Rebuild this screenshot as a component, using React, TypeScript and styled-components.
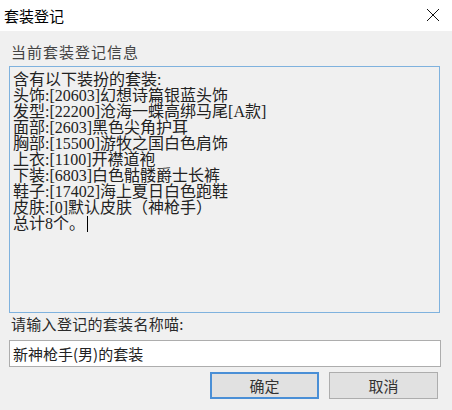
import React from 'react';
import styled, { createGlobalStyle } from 'styled-components';

const GlobalStyle = createGlobalStyle`
  html, body {
    margin: 0;
    padding: 0;
    background: #f0f0f0;
  }
  body {
    font-family: "Noto Sans CJK SC", "Liberation Sans", sans-serif;
  }
`;

const Window = styled.div`
  width: 452px;
  height: 410px;
  display: flex;
  flex-direction: column;
  background: #f0f0f0;
  overflow: hidden;
`;

const TitleBar = styled.div`
  height: 31px;
  background: #ffffff;
  display: flex;
  align-items: center;
  justify-content: space-between;
  padding: 0 12px 0 4px;
  font-size: 15px;
  color: #000;
`;

const CloseBtn = styled.div`
  width: 14px;
  height: 14px;
  display: flex;
  margin-top: -2px;
`;

const Body = styled.div`
  display: flex;
  flex-direction: column;
  padding: 10px 0 0 9px;
`;

const Label = styled.div<{ $muted?: boolean }>`
  height: 22px;
  line-height: 22px;
  font-size: 15px;
  padding-left: 2px;
  letter-spacing: ${p => (p.$muted ? '1px' : '0.3px')};
  color: ${p => (p.$muted ? '#444' : '#2a2a2a')};
`;

const InfoBox = styled.div`
  box-sizing: border-box;
  width: 431px;
  height: 247px;
  margin-top: 3px;
  border: 1px solid #7fb2de;
  background: #f0f0f0;
  padding: 5px 3px;
  font-family: "Liberation Serif", "Noto Sans CJK SC", serif;
  font-size: 16px;
  line-height: 16px;
  color: #222;
  white-space: pre;
`;

const Caret = styled.span`
  display: inline-block;
  width: 1px;
  height: 16px;
  background: #000;
  vertical-align: -3px;
  margin-left: 2px;
`;

const NameInput = styled.div`
  box-sizing: border-box;
  width: 432px;
  height: 27px;
  margin-top: 5px;
  border: 1px solid #adadad;
  background: #ffffff;
  padding: 0 3px;
  display: flex;
  align-items: center;
  font-size: 15px;
  color: #222;
`;

const ButtonRow = styled.div`
  display: flex;
  justify-content: flex-end;
  gap: 10px;
  margin-top: 5px;
  width: 429px;
`;

const Button = styled.div<{ $default?: boolean }>`
  box-sizing: border-box;
  width: 109px;
  height: 27px;
  display: flex;
  align-items: center;
  justify-content: center;
  background: #e1e1e1;
  border: ${p => (p.$default ? '2px solid #4a8fd6' : '1px solid #adadad')};
  font-size: 15px;
  color: #333;
`;

const lines = [
  '含有以下装扮的套装:',
  '头饰:[20603]幻想诗篇银蓝头饰',
  '发型:[22200]沧海一蝶高绑马尾[A款]',
  '面部:[2603]黑色尖角护耳',
  '胸部:[15500]游牧之国白色肩饰',
  '上衣:[1100]开襟道袍',
  '下装:[6803]白色骷髅爵士长裤',
  '鞋子:[17402]海上夏日白色跑鞋',
  '皮肤:[0]默认皮肤（神枪手）',
];

export default function App() {
  return (
    <Window>
      <GlobalStyle />
      <TitleBar>
        <span>套装登记</span>
        <CloseBtn>
          <svg width="14" height="14" viewBox="0 0 14 14">
            <path d="M1 1 L13 13 M13 1 L1 13" stroke="#111" strokeWidth="1" fill="none" />
          </svg>
        </CloseBtn>
      </TitleBar>
      <Body>
        <Label $muted>当前套装登记信息</Label>
        <InfoBox>
          {lines.join('\n') + '\n总计8个。'}
          <Caret />
        </InfoBox>
        <Label>请输入登记的套装名称喵:</Label>
        <NameInput>新神枪手(男)的套装</NameInput>
        <ButtonRow>
          <Button $default>确定</Button>
          <Button>取消</Button>
        </ButtonRow>
      </Body>
    </Window>
  );
}
